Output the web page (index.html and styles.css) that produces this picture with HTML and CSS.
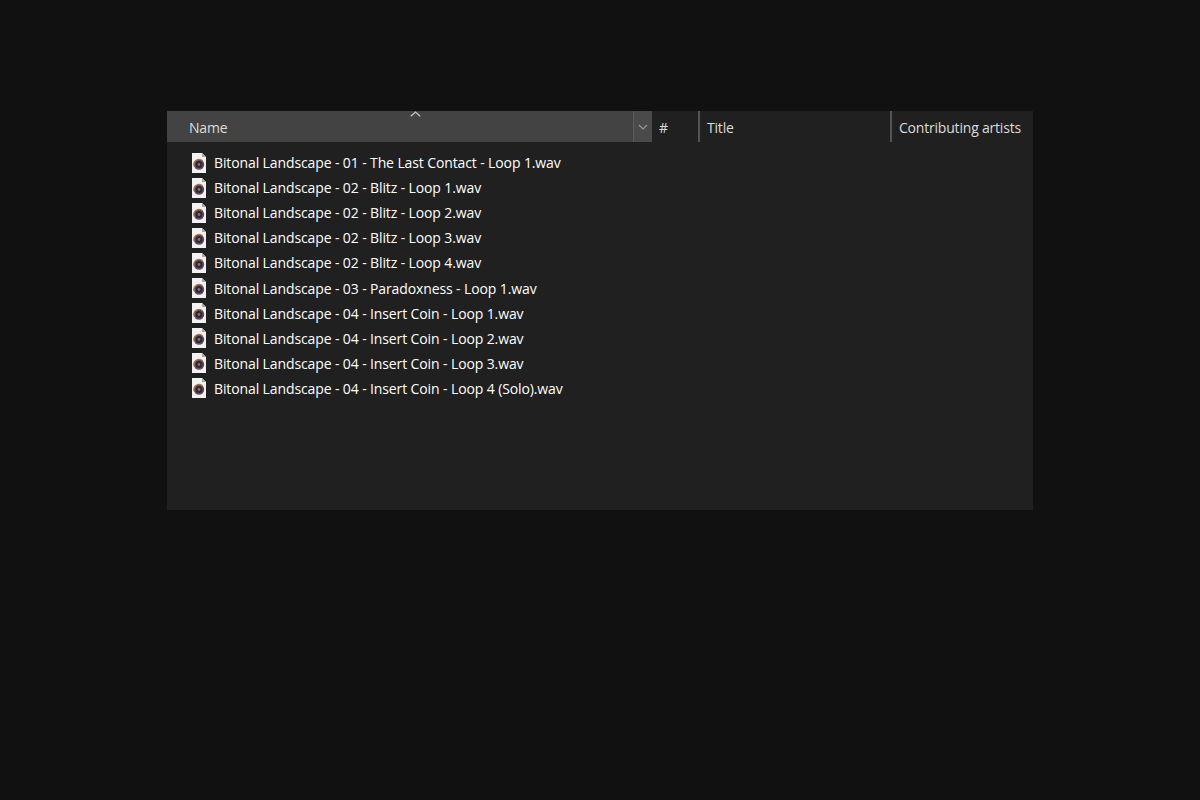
FILE: index.html
```html
<!DOCTYPE html>
<html lang="en">
<head>
<meta charset="utf-8">
<title>Bitonal Landscape</title>
<link rel="stylesheet" href="styles.css">
</head>
<body>
<svg class="defs" width="0" height="0" aria-hidden="true">
  <symbol id="wav" viewBox="0 0 14 20">
    <path d="M0 0H10L14 4V20H0Z" fill="#f2f2f2"/>
    <path d="M10 0L14 4H10Z" fill="#a8a8a8"/>
    <circle cx="7" cy="11.5" r="5.2" fill="#6a4a66"/>
    <path d="M2.1 13.2A5.2 5.2 0 0 1 10.6 7.8" fill="none" stroke="#b5743a" stroke-width="1.2"/>
    <circle cx="7" cy="11.5" r="3.5" fill="#2b2a30"/>
    <circle cx="7" cy="11.5" r="1.4" fill="#77777f"/>
  </symbol>
</svg>
<main class="window">
  <header class="columns">
    <div class="col col-name">
      <span class="sort-arrow"><svg width="11" height="6" viewBox="0 0 11 6"><path d="M.8 5.2L5.5 1L10.2 5.2" fill="none" stroke="#c4c4c4" stroke-width="1.3"/></svg></span>
      <span class="col-label">Name</span>
      <span class="col-drop"><svg width="10" height="6" viewBox="0 0 10 6"><path d="M1 1L5 5L9 1" fill="none" stroke="#9a9a9a" stroke-width="1.1"/></svg></span>
    </div>
    <div class="col col-num"><span class="col-label">#</span></div>
    <div class="col col-title"><span class="col-label">Title</span></div>
    <div class="col col-artist"><span class="col-label">Contributing artists</span></div>
  </header>
  <ul class="files">
    <li class="file"><svg class="file-icon"><use href="#wav"/></svg>Bitonal Landscape - 01 - The Last Contact - Loop 1.wav</li>
    <li class="file"><svg class="file-icon"><use href="#wav"/></svg>Bitonal Landscape - 02 - Blitz - Loop 1.wav</li>
    <li class="file"><svg class="file-icon"><use href="#wav"/></svg>Bitonal Landscape - 02 - Blitz - Loop 2.wav</li>
    <li class="file"><svg class="file-icon"><use href="#wav"/></svg>Bitonal Landscape - 02 - Blitz - Loop 3.wav</li>
    <li class="file"><svg class="file-icon"><use href="#wav"/></svg>Bitonal Landscape - 02 - Blitz - Loop 4.wav</li>
    <li class="file"><svg class="file-icon"><use href="#wav"/></svg>Bitonal Landscape - 03 - Paradoxness - Loop 1.wav</li>
    <li class="file"><svg class="file-icon"><use href="#wav"/></svg>Bitonal Landscape - 04 - Insert Coin - Loop 1.wav</li>
    <li class="file"><svg class="file-icon"><use href="#wav"/></svg>Bitonal Landscape - 04 - Insert Coin - Loop 2.wav</li>
    <li class="file"><svg class="file-icon"><use href="#wav"/></svg>Bitonal Landscape - 04 - Insert Coin - Loop 3.wav</li>
    <li class="file"><svg class="file-icon"><use href="#wav"/></svg>Bitonal Landscape - 04 - Insert Coin - Loop 4 (Solo).wav</li>
  </ul>
</main>
</body>
</html>
```
FILE: styles.css
```css
html, body {
  margin: 0;
  height: 100%;
  background: #111111;
}
body {
  box-sizing: border-box;
  padding: 111px 167px 0;
  font-family: "Open Sans", "Liberation Sans", sans-serif;
  font-size: 14px;
}
.defs { display: block; height: 0; }
.window {
  width: 866px;
  height: 399px;
  background: #202020;
}
.columns {
  display: flex;
  height: 31px;
}
.col {
  position: relative;
  display: flex;
  align-items: center;
  box-sizing: border-box;
  color: #dcdcdc;
  padding-top: 2px;
  letter-spacing: -0.2px;
}
.col-name {
  width: 485px;
  background: #434343;
  padding-left: 22px;
}
.col-num { width: 48px; padding-left: 7px; border-right: 2px solid #555555; }
.col-title { width: 192px; padding-left: 7px; border-right: 2px solid #555555; }
.col-artist { padding-left: 7px; white-space: nowrap; }
.col-drop {
  position: absolute;
  right: 0;
  top: 0;
  bottom: 0;
  width: 19px;
  display: flex;
  align-items: center;
  justify-content: center;
  background: #4a4a4a;
  border-left: 1px solid #5c5c5c;
  box-sizing: border-box;
}
.sort-arrow {
  position: absolute;
  left: 243px;
  top: 0;
  line-height: 0;
}
.files {
  list-style: none;
  margin: 0;
  padding: 8px 0 0 25px;
}
.file {
  display: flex;
  align-items: center;
  height: 25.1px;
  color: #ffffff;
  white-space: nowrap;
  letter-spacing: -0.115px;
}
.file-icon {
  width: 14px;
  height: 20px;
  margin-right: 8px;
  flex: none;
}
```
